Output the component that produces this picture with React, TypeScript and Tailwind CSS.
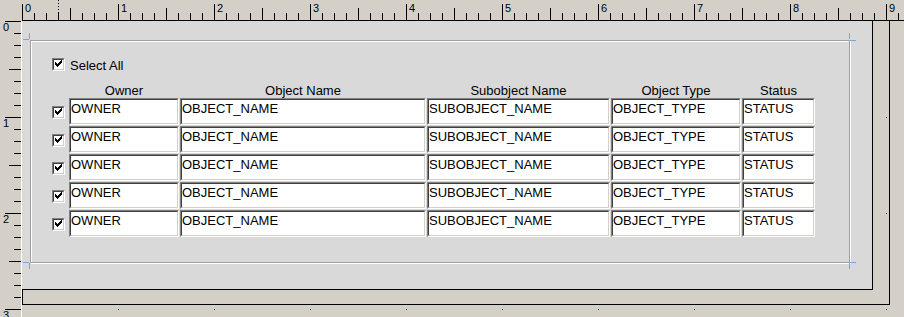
import React from 'react';

const columns = [
  { title: 'Owner', value: 'OWNER', w: 'w-[110px]' },
  { title: 'Object Name', value: 'OBJECT_NAME', w: 'w-[246px]' },
  { title: 'Subobject Name', value: 'SUBOBJECT_NAME', w: 'w-[183px]' },
  { title: 'Object Type', value: 'OBJECT_TYPE', w: 'w-[130px]' },
  { title: 'Status', value: 'STATUS', w: 'w-[73px]' },
];

const rows = [0, 1, 2, 3, 4];

// classic win32 check glyph, pixel columns inside the 9x9 well
const checkCols = [
  [1, 2], [2, 3], [3, 4], [4, 3], [5, 2], [6, 1], [7, 0],
];

function CheckBox() {
  return (
    <span className="block w-[13px] h-[13px] shrink-0 border border-t-[#808080] border-l-[#808080] border-b-white border-r-white">
      <span className="block w-[11px] h-[11px] border border-t-[#404040] border-l-[#404040] border-b-[#d4d0c8] border-r-[#d4d0c8] bg-white">
        <svg width="9" height="9" viewBox="0 0 9 9" shapeRendering="crispEdges" className="block">
          {checkCols.map(([x, y]) => (
            <rect key={x} x={x} y={y} width="1" height="3" fill="#000" />
          ))}
        </svg>
      </span>
    </span>
  );
}

function Field({ value, w }: { value: string; w: string }) {
  return (
    <div className={`h-[27px] ${w} shrink-0 border border-t-[#808080] border-l-[#808080] border-b-white border-r-white`}>
      <div className="h-full pt-px border border-t-[#404040] border-l-[#404040] border-b-[#d4d0c8] border-r-[#d4d0c8] bg-white overflow-hidden whitespace-nowrap">
        {value}
      </div>
    </div>
  );
}

function TopRuler() {
  const ticks: React.ReactNode[] = [];
  for (let k = 0; k < 10; k++) {
    const x0 = k * 96;
    ticks.push(<line key={`M${k}`} x1={x0 + 0.5} y1={4} x2={x0 + 0.5} y2={20} stroke="#000" />);
    ticks.push(
      <text key={`L${k}`} x={x0 + 3} y={12} fontSize="11" fontFamily="Liberation Sans, Arial, sans-serif" fill="#000">
        {k}
      </text>
    );
    for (let j = 1; j < 8; j++) {
      const x = x0 + j * 12 + 0.5;
      ticks.push(<line key={`m${k}-${j}`} x1={x} y1={j === 4 ? 8 : 13} x2={x} y2={20} stroke="#000" />);
    }
  }
  return (
    <svg width="882" height="20" shapeRendering="crispEdges" className="block">
      {ticks}
      <line x1={36.5} y1={0} x2={36.5} y2={20} stroke="#000" strokeDasharray="1 2" />
    </svg>
  );
}

function LeftRuler() {
  const ticks: React.ReactNode[] = [];
  for (let k = 0; k < 4; k++) {
    const y0 = k * 96;
    ticks.push(<line key={`M${k}`} x1={5} y1={y0 + 0.5} x2={21} y2={y0 + 0.5} stroke="#000" />);
    ticks.push(
      <text key={`L${k}`} x={3} y={y0 + 10} fontSize="11" fontFamily="Liberation Sans, Arial, sans-serif" fill="#000">
        {k}
      </text>
    );
    for (let j = 1; j < 8; j++) {
      const y = y0 + j * 12 + 0.5;
      ticks.push(<line key={`m${k}-${j}`} x1={j === 4 ? 9 : 14} y1={y} x2={21} y2={y} stroke="#000" />);
    }
  }
  return (
    <svg width="21" height="296" shapeRendering="crispEdges" className="block">
      {ticks}
    </svg>
  );
}

function Corner({ className }: { className: string }) {
  return <span className={`absolute bg-[#7aa6dc] ${className}`} />;
}

export default function App() {
  const dots = [118, 214, 310, 406, 502, 598, 694, 790, 886];
  return (
    <div className="relative w-[904px] h-[317px] overflow-hidden bg-[#d4d0c8] text-black text-[13px] leading-[15px] font-['Liberation_Sans',Arial,sans-serif]">
      {/* rulers */}
      <div className="flex h-[21px]">
        <div className="w-[22px]" />
        <div className="flex-1 border-b border-black">
          <TopRuler />
        </div>
      </div>

      <div className="flex">
        <div className="w-[22px] h-[296px] border-r border-white">
          <LeftRuler />
        </div>

        {/* window outline */}
        <div className="flex flex-col w-[868px] h-[284px] border-r border-b border-black">
          <div className="flex">
            <div className="w-[851px] h-[269px] shrink-0 border-r border-b border-black bg-[#d9d9d9] pl-[8px] pt-[19px]">
              {/* frame */}
              <div className="relative w-[820px] h-[223px] border border-[#a0a0a0] shadow-[inset_1px_1px_0_#fff,1px_1px_0_#fff] pl-[21px] pt-[17px]">
                <Corner className="left-[-2px] top-[-8px] w-px h-[6px]" />
                <Corner className="left-[-8px] top-[-2px] w-[6px] h-px" />
                <Corner className="left-[818px] top-[-8px] w-px h-[6px]" />
                <Corner className="left-[819px] top-[-1px] w-[6px] h-px" />
                <Corner className="left-[818px] top-[222px] w-px h-[6px]" />
                <Corner className="left-[819px] top-[221px] w-[6px] h-px" />
                <Corner className="left-[-2px] top-[222px] w-px h-[6px]" />
                <Corner className="left-[-8px] top-[221px] w-[6px] h-px" />

                <div className="flex items-start gap-[5px]">
                  <CheckBox />
                  <span>Select All</span>
                </div>

                <div className="flex gap-px pl-[17px] mt-[10px]">
                  {columns.map((c) => (
                    <div key={c.title} className={`${c.w} shrink-0 text-center`}>
                      {c.title}
                    </div>
                  ))}
                </div>

                <div className="flex flex-col gap-px">
                  {rows.map((r) => (
                    <div key={r} className="flex items-start">
                      <div className="mt-[8px] mr-[4px]">
                        <CheckBox />
                      </div>
                      <div className="flex gap-px">
                        {columns.map((c) => (
                          <Field key={c.title} value={c.value} w={c.w} />
                        ))}
                      </div>
                    </div>
                  ))}
                </div>
              </div>
            </div>
            <div className="flex-1" />
          </div>
          <div className="flex-1 border-l border-black" />
        </div>
      </div>

      {/* layout grid dots outside the canvas */}
      <span className="absolute left-[886px] top-[117px] w-px h-px bg-[#404040]" />
      <span className="absolute left-[886px] top-[213px] w-px h-px bg-[#404040]" />
      {dots.map((x) => (
        <span key={x} className="absolute top-[309px] w-px h-px bg-[#404040]" style={{ left: x }} />
      ))}
    </div>
  );
}
